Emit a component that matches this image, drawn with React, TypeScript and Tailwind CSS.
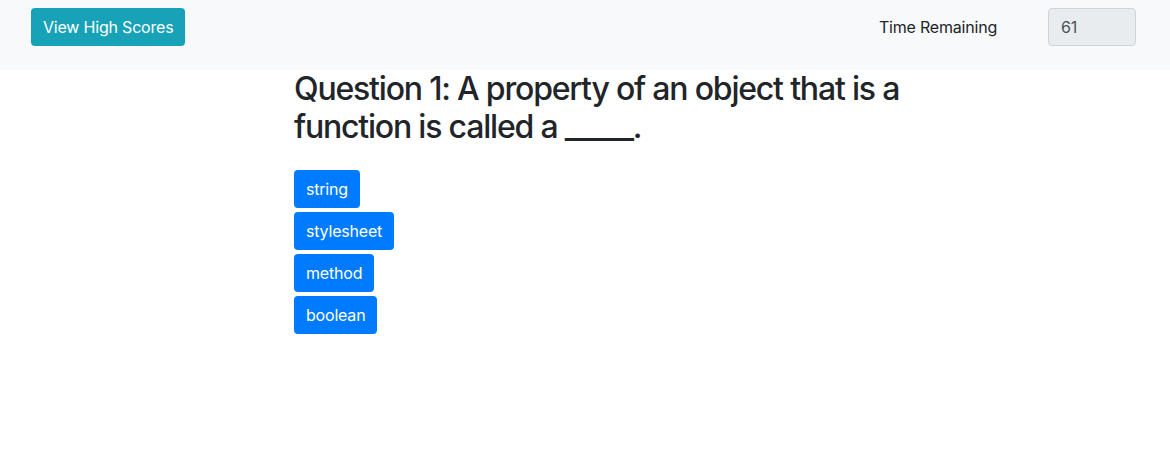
export default function App() {
  const answers = ["string", "stylesheet", "method", "boolean"];

  return (
    <div className="min-h-[450px] bg-white font-['Inter',sans-serif] text-[#212529] tracking-[-0.2px]">
      <nav className="h-[70px] bg-[#f8f9fa] flex items-start justify-between pt-2 pl-[31px] pr-[34px]">
        <button className="h-[38px] px-3 rounded bg-[#17a2b8] text-white text-base">
          View High Scores
        </button>
        <div className="flex items-center h-[38px]">
          <span className="text-base mr-[51px]">Time Remaining</span>
          <input
            readOnly
            value="61"
            className="w-[88px] h-[38px] px-3 rounded border border-[#ced4da] bg-[#e9ecef] text-base text-[#495057] outline-none"
          />
        </div>
      </nav>

      <main className="pl-[294px]">
        <div className="w-[620px]">
          <h2 className="text-[32px] leading-[1.2] font-medium tracking-[-1.2px]">
            Question 1: A property of an object that is a function is called a _____.
          </h2>
          <div className="mt-[23px] flex flex-col items-start gap-1">
            {answers.map((a) => (
              <button
                key={a}
                className="h-[38px] px-3 rounded bg-[#007bff] text-white text-base"
              >
                {a}
              </button>
            ))}
          </div>
        </div>
      </main>
    </div>
  );
}
